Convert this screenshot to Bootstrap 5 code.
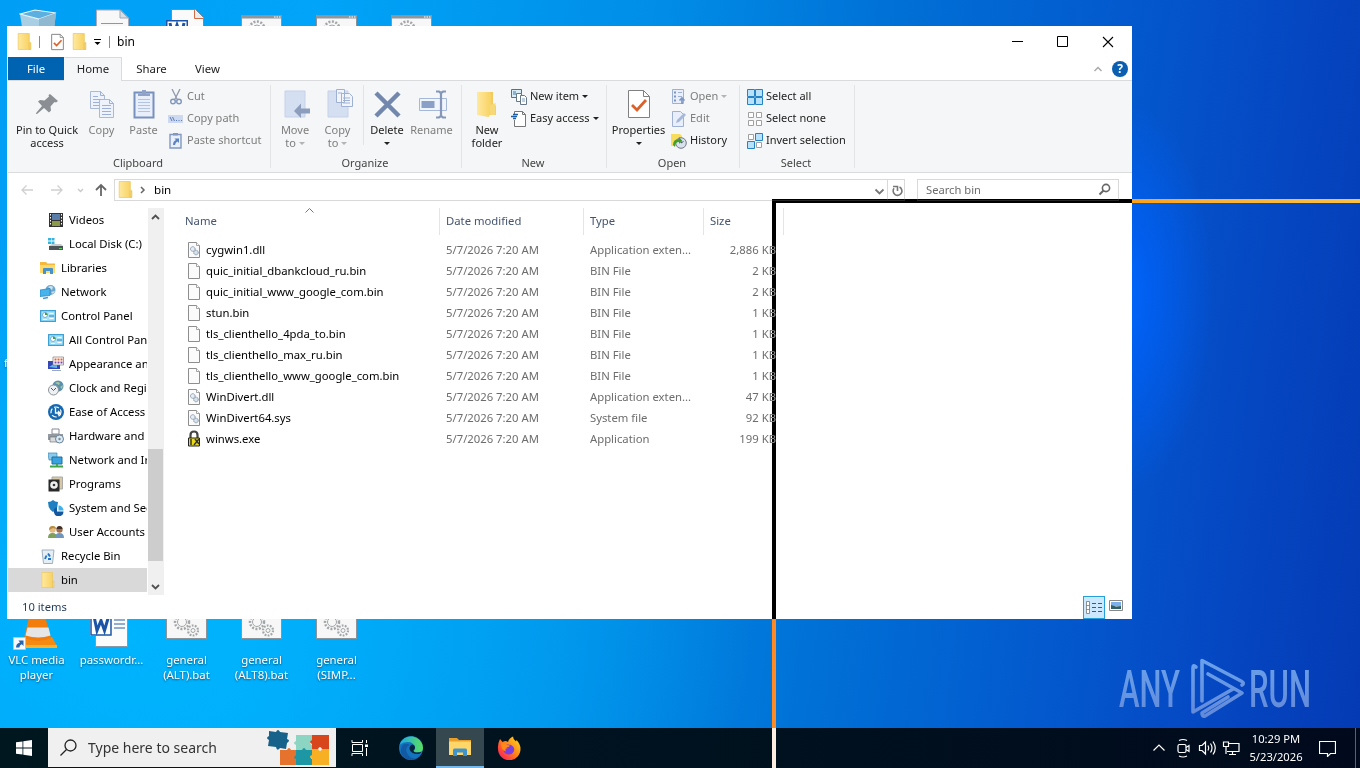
<!DOCTYPE html>
<html lang="en">
<head>
    <meta charset="UTF-8">
    <meta name="viewport" content="width=device-width, initial-scale=1.0">
    <title>bin</title>
    <!-- Bootstrap CSS -->
    <link href="https://cdn.jsdelivr.net/npm/bootstrap@5.3.0/dist/css/bootstrap.min.css" rel="stylesheet">
    <style>
        body {
            width: 1360px;
            height: 768px;
            overflow: hidden;
            font-family: "Noto Sans", "Open Sans", sans-serif;
            font-size: 11.4px;
            line-height: 13px;
            color: #000;
            white-space: nowrap;
        }
        svg { display: block; flex: none; }
        .desktop {
            height: 728px;
            background:
                radial-gradient(ellipse 100px 200px at 1115px 295px, rgba(0, 104, 255, 1), rgba(0, 98, 250, .75) 35%, rgba(0, 80, 220, 0) 100%),
                linear-gradient(97deg, #009ff5 0, #00a4f8 22%, #008ee8 45%, #0070d6 62%, #0453cb 82%, #0545c0 91%, #043bb4 100%);
        }
        .desktop::before {
            content: "";
            position: absolute;
            inset: 0 0 40px 0;
            background: radial-gradient(ellipse 620px 420px at 130px 640px, rgba(0, 184, 255, .8), rgba(0, 184, 255, 0));
        }
        .shortcut { position: absolute; width: 75px; text-align: center; color: #fff; line-height: 15px; text-shadow: 0 1px 2px rgba(0, 0, 0, .55); }
        .shortcut svg { margin: 0 auto; }
        .brand { position: absolute; left: 1115px; top: 655px; }

        /* explorer window */
        .explorer { position: absolute; left: 7px; top: 26px; width: 1125px; height: 593px; background: #fff; padding-left: 1px; }
        .title-row { height: 31px; }
        .title-row .sep { width: 1px; height: 12px; background: #8c8c8c; }
        .tabs-row { height: 23px; color: #222; }
        .tab-item { height: 23px; line-height: 23px; text-align: center; }
        .tab-file { width: 56px; background: #0063b1; color: #fff; }
        .tab-home { width: 58px; height: 24px; line-height: 21px; background: #f5f6f7; border: 1px solid #dadbdc; border-bottom: 0; border-left-color: #f5f6f7; margin-bottom: -1px; position: relative; }
        .ribbon { height: 93px; background: #f5f6f7; border-top: 1px solid #dadbdc; border-bottom: 1px solid #dadbdc; color: #222; font-size: 11px; }
        .rgroup { border-right: 1px solid #e2e3e4; margin: 4px 0; height: 83px; }
        .rgroup-body { height: 70px; }
        .rgroup-label { text-align: center; line-height: 16px; color: #444; padding-right: 2px; }
        .big { padding-top: 3px; text-align: center; }
        .big svg { margin: 0 auto 3px; }
        .small-row { height: 22px; gap: 3px; padding-bottom: 1px; }
        .small-row svg { position: relative; top: 1px; }
        .off { color: #7d7d7d; }
        .caret { display: inline-block; border: 3px solid transparent; border-top-color: currentColor; border-bottom: 0; vertical-align: 2px; margin-left: 3px; }
        .off .caret { opacity: .55; }

        .address-row { height: 35px; padding-top: 6px; }
        .field { height: 22px; border: 1px solid #d9d9d9; padding-bottom: 1px; }

        .nav-pane { width: 139px; overflow: hidden; }
        .node { height: 24px; gap: 5px; padding-left: 32px; padding-bottom: 2px; font-size: 11.3px; }
        .node svg { position: relative; top: 1px; }
        .node.deep { padding-left: 40px; }
        .node.on { background: #d9d9d9; }
        .scroller { width: 16px; background: #f0f0f0; margin-left: 1px; }
        .thumb { height: 112px; width: 15px; background: #cdcdcd; }

        .head-row { height: 27px; color: #44546f; line-height: 26px; font-size: 11.3px; }
        .head-row > div { border-right: 1px solid #e5e5e5; }
        .c-name { width: 276px; }
        .c-date { width: 144px; padding-left: 6px; }
        .c-type { width: 120px; padding-left: 6px; }
        .c-size { width: 80px; padding-left: 6px; }
        .frow { height: 21px; color: #6d6d6d; font-size: 11.3px; }
        .frow .c-name { color: #000; padding-left: 22px; gap: 4px; }
        .frow .c-size { text-align: right; padding-right: 8px; }
        .status { height: 24px; color: #1e395b; }
        .view-on { width: 22px; height: 23px; background: #cce8ff; border: 1px solid #26a0da; }

        /* taskbar */
        .taskbar { height: 40px; background: linear-gradient(90deg, #00171f, #00121f 50%, #010a1c); color: #fff; }
        .task-btn { width: 48px; height: 40px; }
        .task-on { background: #35474f; border-bottom: 2px solid #76b9ed; }
        .search-box { width: 288px; height: 39px; background: #f0f0f0; color: #333; font-size: 14px; }

        /* cursor guides, they invert whatever is under them */
        .guide { position: absolute; background: #fff; mix-blend-mode: difference; z-index: 10; }
        .guide-h { left: 772px; top: 199px; width: 588px; height: 4px; }
        .guide-v { left: 772px; top: 203px; width: 4px; height: 565px; }
    </style>
</head>
<body>
    <!-- Shared icons -->
    <svg width="0" height="0" class="position-absolute">
        <defs>
            <linearGradient id="gFolder" x1="0" x2="1"><stop offset="0" stop-color="#ffe9a0"/><stop offset="1" stop-color="#f8d15f"/></linearGradient>
            <linearGradient id="gFox" x1="1" y1="0" x2="0" y2="1"><stop offset="0" stop-color="#ffe226"/><stop offset=".45" stop-color="#ff8a16"/><stop offset=".8" stop-color="#ff3647"/><stop offset="1" stop-color="#e31587"/></linearGradient>
            <linearGradient id="gEdge" x1="0" y1="0" x2="1" y2="0"><stop offset="0" stop-color="#1ca8e8"/><stop offset="1" stop-color="#5be05a"/></linearGradient>
            <linearGradient id="gBrand" gradientUnits="userSpaceOnUse" x1="0" x2="0" y1="5" y2="62"><stop offset="0" stop-color="#7db2f2"/><stop offset="1" stop-color="#7395de"/></linearGradient>
        </defs>
        <symbol id="folder" viewBox="0 0 16 16"><path d="M2 .5h10.500V10l1.500-1v6.500H2z" fill="#edc75b"/><path d="M2 .5h10.500v12l.5 3H2z" fill="url(#gFolder)" stroke="#ecc966" stroke-width=".6"/><path d="M12.300 9.500l1.700-.5v6.500h-1.500z" fill="#fbdc7d" stroke="#e0b84f" stroke-width=".5"/></symbol>
        <symbol id="file" viewBox="0 0 16 18"><path d="M2.500 1.500h8l3 3v12h-11z" fill="#fbfbfb" stroke="#8e8e8e"/><path d="M10.500 1.500v3h3" fill="#fff" stroke="#8e8e8e" stroke-width=".8"/></symbol>
        <symbol id="dll" viewBox="0 0 16 18"><path d="M2.500 1.500h8l3 3v12h-11z" fill="#fbfbfb" stroke="#8e8e8e"/><path d="M10.500 1.500v3h3" fill="#fff" stroke="#8e8e8e" stroke-width=".8"/><circle cx="6.800" cy="8" r="2.300" fill="#e6eef5" stroke="#7d8fa3" stroke-dasharray="1.200 .5"/><circle cx="10" cy="11.500" r="2.300" fill="#d5e2ee" stroke="#7d8fa3" stroke-dasharray="1.200 .5"/></symbol>
        <symbol id="check" viewBox="0 0 16 20"><path d="M1.500 1.500h9.500l3.500 3.500v13.500h-13z" fill="#fff" stroke="#7b7b7b"/><path d="M11 1.500V5h3.500" fill="none" stroke="#7b7b7b" stroke-width=".8"/><path d="M4 11l3 3 5.500-6" fill="none" stroke="#d9622b" stroke-width="1.800"/></symbol>
        <symbol id="panel" viewBox="0 0 16 16"><path d="M.5 2.500h15v11H.5z" fill="#a9e1f9" stroke="#1c7fb5"/><path d="M1 3h14v10H1z" fill="none" stroke="#5ec2ee"/><circle cx="5" cy="7" r="2.500" fill="#fff" stroke="#3a88b8" stroke-width=".6"/><path d="M5 7V4.500A2.500 2.500 0 0 1 7.500 7z" fill="#4d9c3f"/><path d="M9.500 5.500h4M9.500 10.500h4M3 11.500h4" stroke="#fff" stroke-width="1.200"/><path d="M9 8h5" stroke="#277fae"/></symbol>
        <symbol id="bat" viewBox="0 0 41 50"><path d="M.5 .5h40v48H.5z" fill="#f7f7f7" stroke="#8d9499"/><path d="M1 1h39v2.500H1z" fill="#8c979e"/><path d="M33 2h1.500M35.500 2H37M38 2h1.500" stroke="#fff"/><g fill="none" stroke="#a3a6a8"><circle cx="16" cy="14" r="7.500" stroke-dasharray="2 1.500" stroke-width="2.500"/><circle cx="16" cy="14" r="4"/></g><g fill="none" stroke="#a3a6a8"><circle cx="16" cy="32" r="7" stroke-dasharray="2 1.500" stroke-width="2.500"/><circle cx="16" cy="32" r="4.500"/><circle cx="27" cy="40.500" r="5" stroke-dasharray="1.800 1.300" stroke-width="2.200"/><circle cx="27" cy="40.500" r="2"/></g></symbol>
    </svg>

    <div class="desktop">
        <!-- Desktop shortcuts -->
        <div class="shortcut" style="left:0;top:9px"><svg width="38" height="46" viewBox="0 0 38 46"><path d="M1 5l15-4 21 3-5 40H7z" fill="#a9cfe4"/><path d="M1 5l15-4 21 3-17 6z" fill="#5bb0df" stroke="#e6f4fb" stroke-width="1.200"/><path d="M20 10l17-6-5 40H20z" fill="#8fb9d0"/></svg></div>
        <div class="shortcut" style="left:75px;top:9px"><svg width="33" height="44" viewBox="0 0 33 44"><path d="M.5 1h24l8 8v34H.5z" fill="#f8f8f8" stroke="#aab"/><path d="M24 1v8h8z" fill="#d9dde2" stroke="#9ab"/><path d="M5 14.500h22M5 17.500h22" stroke="#8699ae"/></svg></div>
        <div class="shortcut" style="left:147px;top:8px"><svg width="38" height="44" viewBox="0 0 38 44"><path d="M5.500 1.500h24l8 8V43H5.500z" fill="#fafafa" stroke="#7b8a99"/><path d="M28.500 1.500v9h9" fill="#e8ecf0" stroke="#d06d45"/><path d="M0 12h22v22H0z" fill="#1c55a8"/><path d="M1.500 13.500h19v19h-19z" fill="#fff"/><path d="M4 15l3 14 4-12 4 12 3-14" fill="none" stroke="#1c55a8" stroke-width="3"/></svg></div>
        <div class="shortcut" style="left:224px;top:15px"><svg width="41" height="50"><use href="#bat"/></svg></div>
        <div class="shortcut" style="left:299px;top:15px"><svg width="41" height="50"><use href="#bat"/></svg></div>
        <div class="shortcut" style="left:374px;top:15px"><svg width="41" height="50"><use href="#bat"/></svg></div>
        <div class="shortcut text-start" style="left:4px;top:355px">f</div>

        <div class="shortcut" style="left:-1px;top:600px"><svg width="48" height="52" viewBox="0 0 48 52"><path d="M12 37h27l5 9v2H8z" fill="#f58a12"/><path d="M19 5h10l9 33q-13 6-27 0z" fill="#f27c0c"/><path d="M14.500 27.500h21l2 8q-12 4-25 0z" fill="#e6e6e6"/><path d="M7 45h37v3H7z" fill="#ffb02a"/><path d="M.5 37.500h12v12H.5z" fill="#f5f8fc" stroke="#b6c7d8"/><path d="M3 47.500q0-4 4-5l-1.500-2h5v5.500l-1.700-1.700q-2 .5-2.500 3.200z" fill="#2a63ad"/></svg>VLC media<br>player</div>
        <div class="shortcut" style="left:74px;top:604px"><svg style="margin-left:16px" width="38" height="48" viewBox="0 0 38 48"><path d="M5.500 1h32v41.500h-32z" fill="#fbfbfb" stroke="#8a97a5"/><path d="M24 16h11M24 20h11M24 24h11" stroke="#2b5da8"/><path d="M0 9h22v23H0z" fill="#fff"/><path d="M1 10h20v21H1z" fill="#fff" stroke="#1c55a8" stroke-width="1.500"/><path d="M4.500 14.500l2.500 12 4-10 3.500 10 3.500-12" fill="none" stroke="#1c55a8" stroke-width="3"/></svg>passwordr...</div>
        <div class="shortcut" style="left:149px;top:590px"><svg width="41" height="62" viewBox="0 0 41 62"><use href="#bat" width="41" height="50"/></svg>general<br>(ALT).bat</div>
        <div class="shortcut" style="left:224px;top:590px"><svg width="41" height="62" viewBox="0 0 41 62"><use href="#bat" width="41" height="50"/></svg>general<br>(ALT8).bat</div>
        <div class="shortcut" style="left:299px;top:590px"><svg width="41" height="62" viewBox="0 0 41 62"><use href="#bat" width="41" height="50"/></svg>general<br>(SIMP...</div>

        <!-- Watermark -->
        <svg class="brand" width="220" height="70" viewBox="0 0 220 70" opacity=".85">
            <g font-family="Roboto, sans-serif" font-size="51" font-weight="500" fill="url(#gBrand)">
                <text x="4" y="52" textLength="61" lengthAdjust="spacingAndGlyphs">ANY</text>
                <text x="134" y="52" textLength="62" lengthAdjust="spacingAndGlyphs">RUN</text>
            </g>
            <g fill="none" stroke="url(#gBrand)" stroke-width="3.600" stroke-linejoin="round" stroke-linecap="round">
                <path d="M81 12q-3-3-3 1V57L118 34"/>
                <path d="M87 46V5.500L126 26q4 2 1 4"/>
                <path d="M93 19L127 38 90 61q-3 1-3-3L113 42"/>
            </g>
        </svg>
    </div>

    <!-- Explorer window -->
    <div class="explorer d-flex flex-column">
        <div class="title-row d-flex align-items-center">
            <svg class="ms-2" width="17" height="17"><use href="#folder"/></svg>
            <div class="sep" style="margin-left:6px"></div>
            <svg style="margin-left:10px" width="15" height="18"><use href="#check"/></svg>
            <svg style="margin-left:6px" width="17" height="17"><use href="#folder"/></svg>
            <svg style="margin-left:5px" width="9" height="9" viewBox="0 0 9 9"><path d="M1 2.500h7" stroke="#000"/><path d="M1.500 5h6l-3 3z"/></svg>
            <div class="sep" style="margin-left:7px"></div>
            <div style="font-size:12px;margin-left:7px">bin</div>
            <svg class="ms-auto" width="11" height="11" viewBox="0 0 11 11"><path d="M0 5.500h11" stroke="#000"/></svg>
            <svg style="margin-left:34px" width="11" height="11" viewBox="0 0 11 11"><path d="M.5 .5h10v10H.5z" fill="none" stroke="#000"/></svg>
            <svg style="margin:0 18px 0 34px" width="12" height="12" viewBox="0 0 12 12"><path d="M1 1l10 10M11 1L1 11" stroke="#000" stroke-width="1.100"/></svg>
        </div>
        <div class="tabs-row d-flex">
            <div class="tab-item tab-file">File</div>
            <div class="tab-item tab-home">Home</div>
            <div class="tab-item" style="width:59px">Share</div>
            <div class="tab-item" style="width:53px">View</div>
            <div class="ms-auto d-flex align-items-center" style="padding-right:4px;gap:9px">
                <svg width="10" height="8" viewBox="0 0 10 8"><path d="M1.500 6L5 2.500 8.500 6" fill="none" stroke="#aaa" stroke-width="1.500"/></svg>
                <svg width="16" height="16" viewBox="0 0 16 16"><circle cx="8" cy="8" r="8" fill="#0b5fb0"/><text x="8" y="12.300" font-size="12" font-weight="700" fill="#fff" text-anchor="middle">?</text></svg>
            </div>
        </div>
        <div class="ribbon d-flex">
            <!-- Clipboard -->
            <div class="rgroup" style="width:263px">
                <div class="rgroup-body d-flex">
                    <div class="big" style="width:78px"><svg width="32" height="32" viewBox="0 0 32 32"><path d="M19 6l8 7-2 1.500-1.500-.5-4 4.500.5 4-2 2-5-4.500L6 26l-1 0 .5-1.500L11 18l-4-4.500 2-1.500 4.500.5 4.500-4-.5-1.500z" fill="#8b8f94"/></svg>Pin to Quick<br>access</div>
                    <div class="big off" style="width:31px;margin-right:5px"><svg width="32" height="32" viewBox="0 0 32 32"><g stroke="#a9b9d6" fill="#eef2fa"><path d="M4.500 3.500h10l4 4v13h-14z"/><path d="M13.500 11.500h10l4 4v14h-14z"/></g><path d="M14.500 3.500v4h4M23.500 11.500v4h4M7 8.500h5M7 11.500h8M7 14.500h6M7 17.500h6M16 17.500h9M16 20.500h9M16 23.500h9M16 26.500h9" stroke="#9db1d6" fill="none"/></svg>Copy</div>
                    <div class="big off" style="width:43px"><svg width="32" height="32" viewBox="0 0 32 32"><path d="M6.500 4.500h19v25h-19z" fill="#e8eefa" stroke="#7890bd" stroke-width="2"/><path d="M10 5.500h12V8H10zM14 2h4v4h-4z" fill="#8fa3c8"/><path d="M10 11.500h12M10 14.500h12M10 17.500h12M10 20.500h12M10 23.500h12" stroke="#b3c3e3"/></svg>Paste</div>
                    <div style="margin-left:3px">
                        <div class="small-row d-flex align-items-center off"><svg width="16" height="16" viewBox="0 0 16 16"><path d="M4 0l5.500 11M12 0L6.500 11" stroke="#8e99ab" stroke-width="1.300"/><circle cx="5" cy="12.500" r="2.300" fill="none" stroke="#8197bd" stroke-width="1.400"/><circle cx="11" cy="12.500" r="2.300" fill="none" stroke="#8197bd" stroke-width="1.400"/></svg>Cut</div>
                        <div class="small-row d-flex align-items-center off"><svg width="16" height="16" viewBox="0 0 16 16"><path d="M0 4h15v8H0z" fill="#cdd9f0"/><path d="M2 6l2 4M4.500 6l2 4M8 9.500h1M10.500 9.500h1M13 9.500h1" stroke="#5b7bb5"/></svg>Copy path</div>
                        <div class="small-row d-flex align-items-center off"><svg width="16" height="16" viewBox="0 0 16 16"><path d="M2 1.500h11v13.500H2z" fill="#eaf0fb" stroke="#8398c0" stroke-width="1.400"/><path d="M5 0h5v2.500H5z" fill="#8398c0"/><path d="M5 12q0-4 3-5L6.500 5.500H11V10L9.500 8.500Q7.500 9 7 12z" fill="#5b83c4"/></svg>Paste shortcut</div>
                    </div>
                </div>
                <div class="rgroup-label">Clipboard</div>
            </div>
            <!-- Organize -->
            <div class="rgroup" style="width:191px">
                <div class="rgroup-body d-flex">
                    <div class="big off" style="width:42px;margin-left:3px"><svg width="32" height="32" viewBox="0 0 32 32"><path d="M6 3h20v26H6z" fill="#d5dff2" stroke="#c5d1e8"/><path d="M31 20.500H22v-5L15 23l7 7v-4.500h9z" fill="#8d9ebd"/></svg>Move<br>to<span class="caret"></span></div>
                    <div class="big off" style="width:43px"><svg width="32" height="32" viewBox="0 0 32 32"><path d="M6 3h20v26H6z" fill="#d5dff2" stroke="#c5d1e8"/><path d="M14.500 1.500h8v13h-8zM19.500 5.500h8l3 3v10h-11z" fill="#f1f4fb" stroke="#9fb1d2"/><path d="M21 10h7M21 12.500h7M21 15h7M16 5h4" stroke="#9fb1d2"/></svg>Copy<br>to<span class="caret"></span></div>
                    <div style="width:1px;height:60px;background:#e2e3e4;margin:0 2px 0 4px"></div>
                    <div class="big" style="width:42px"><svg width="32" height="32" viewBox="0 0 32 32"><path d="M5 5l23 23M28 5L5 28" stroke="#7287ad" stroke-width="4.500"/></svg>Delete<br><span class="caret m-0"></span></div>
                    <div class="big off" style="width:47px"><svg width="32" height="32" viewBox="0 0 32 32"><path d="M3.500 10.500h27v12h-27z" fill="#f0f4fb" stroke="#a5b8da"/><path d="M5.500 13h13v7h-13z" fill="#8ba0c6"/><path d="M20 3.500h3l2 1.500 2-1.500h3M20 29.500h3l2-1.500 2 1.500h3M25 5v23" fill="none" stroke="#8497bb" stroke-width="2.200"/></svg>Rename</div>
                </div>
                <div class="rgroup-label">Organize</div>
            </div>
            <!-- New -->
            <div class="rgroup" style="width:145px">
                <div class="rgroup-body d-flex">
                    <div class="big" style="width:46px;margin-left:2px"><svg width="32" height="32" viewBox="0 0 32 32"><path d="M6 4h16v16l3-3v10H6z" fill="#f0c95f"/><path d="M6 4h13l1.500 3v18l-3 4L6 27z" fill="url(#gFolder)"/><path d="M18.500 17l6-2v12h-5z" fill="#f7d877"/></svg>New<br>folder</div>
                    <div style="margin-left:1px">
                        <div class="small-row d-flex align-items-center"><svg width="16" height="16" viewBox="0 0 16 16"><path d="M.5 .5h10v8H.5z" fill="#d8edf8" stroke="#3b78a8"/><path d="M2 3h3M2 5h3" stroke="#3b78a8"/><path d="M5.500 4.500h5v8h-5z" fill="#fff" stroke="#678"/><path d="M9.500 6.500h4l2 2v7h-6z" fill="#fff" stroke="#678"/><path d="M11 10h3M11 12h3" stroke="#7aa0c0"/></svg><span>New item<span class="caret"></span></span></div>
                        <div class="small-row d-flex align-items-center"><svg width="16" height="16" viewBox="0 0 16 16"><path d="M3.500 4V.5h8l3 3v12h-11V9" fill="#fff" stroke="#777"/><path d="M11.500 .5v3h3" fill="none" stroke="#777"/><path d="M2 3.500h5M0 5.500h6M2 7.500h3" stroke="#1a5fa8" stroke-width="1.300"/></svg><span>Easy access<span class="caret"></span></span></div>
                    </div>
                </div>
                <div class="rgroup-label">New</div>
            </div>
            <!-- Open -->
            <div class="rgroup" style="width:133px">
                <div class="rgroup-body d-flex">
                    <div class="big" style="width:59px;margin-left:2px"><svg width="32" height="32" viewBox="0 0 32 32"><path d="M5.500 2.500h15l6 6v21h-21z" fill="#fff" stroke="#808080"/><path d="M20.500 2.500v6h6" fill="none" stroke="#808080"/><path d="M9 17l5 5 9-10" fill="none" stroke="#d9622b" stroke-width="2.800"/></svg>Properties<br><span class="caret m-0"></span></div>
                    <div style="margin-left:3px">
                        <div class="small-row d-flex align-items-center off"><svg width="16" height="16" viewBox="0 0 16 16"><path d="M1.500 .5h11v14h-11z" fill="#e8eefa" stroke="#9fb1d2"/><path d="M3 3.500h2M3 7.500h2M3 11.500h2" stroke="#7d95c2" stroke-width="2"/><path d="M7 3.500h4M7 7.500h4" stroke="#9fb1d2"/><path d="M11 15v-5M8.500 11.500L11 9l2.500 2.500" fill="none" stroke="#7d95c2" stroke-width="1.700"/></svg><span>Open<span class="caret"></span></span></div>
                        <div class="small-row d-flex align-items-center off"><svg width="16" height="16" viewBox="0 0 16 16"><path d="M1.500 .5h8l3 3v12h-11z" fill="#e8eefa" stroke="#9fb1d2"/><path d="M5 12l1-3 7-7 2 2-7 7z" fill="#a5b7da"/></svg><span>Edit</span></div>
                        <div class="small-row d-flex align-items-center"><svg width="16" height="16" viewBox="0 0 16 16"><path d="M0 1h9l2 2v10H0z" fill="#f8dc5c"/><circle cx="10" cy="10" r="5.300" fill="#d8e2ec" stroke="#778"/><path d="M10 7v3l2.500-1.500" fill="none" stroke="#456"/><path d="M2 12q0-6 6-6V4l3 3.500L8 11V9Q4 9 4 14z" fill="#43a02c"/></svg><span>History</span></div>
                    </div>
                </div>
                <div class="rgroup-label">Open</div>
            </div>
            <!-- Select -->
            <div class="rgroup" style="width:115px">
                <div class="rgroup-body" style="padding-left:7px">
                    <div class="small-row d-flex align-items-center"><svg width="16" height="16" viewBox="0 0 16 16"><path d="M.5 .5h7v7h-7zM8.500 .5h7v7h-7zM.5 8.500h7v7h-7zM8.500 8.500h7v7h-7z" fill="#b8e2fb" stroke="#2583c5"/></svg>Select all</div>
                    <div class="small-row d-flex align-items-center"><svg width="16" height="16" viewBox="0 0 16 16"><path d="M1.500 1.500h5v5h-5zM9.500 1.500h5v5h-5zM1.500 9.500h5v5h-5zM9.500 9.500h5v5h-5z" fill="#fff" stroke="#a0a0a0"/></svg>Select none</div>
                    <div class="small-row d-flex align-items-center"><svg width="16" height="16" viewBox="0 0 16 16"><path d="M1.500 1.500h5v5h-5zM9.500 9.500h5v5h-5z" fill="#fff" stroke="#a0a0a0"/><path d="M8.500 .5h7v7h-7zM.5 8.500h7v7h-7z" fill="#b8e2fb" stroke="#2583c5"/></svg>Invert selection</div>
                </div>
                <div class="rgroup-label">Select</div>
            </div>
        </div>

        <!-- Address bar -->
        <div class="address-row d-flex">
            <div class="d-flex align-items-center" style="width:106px;height:22px">
                <svg width="106" height="22" viewBox="0 0 106 22" fill="none"><path d="M25 11H14M18.500 6.500L14 11l4.500 4.500M43 11h11M49.500 6.500L54 11l-4.500 4.500" stroke="#d0d0d0" stroke-width="1.300"/><path d="M70 10l2.500 2.500L75 10" stroke="#c8c8c8" stroke-width="1.300"/><path d="M93 17V6M88 11l5-5 5 5" stroke="#666" stroke-width="1.800"/></svg>
            </div>
            <div class="field d-flex align-items-center" style="width:791px">
                <svg style="margin-left:2px" width="17" height="17"><use href="#folder"/></svg>
                <svg style="margin-left:6px" width="6" height="8" viewBox="0 0 6 8"><path d="M1 1l3 3-3 3" fill="none" stroke="#666" stroke-width="1.500"/></svg>
                <span style="margin-left:8px;font-size:11.600px">bin</span>
                <svg class="ms-auto" width="30" height="20" viewBox="0 0 30 20" fill="none"><path d="M1.500 9.500L5.500 13.500l4-4" stroke="#777" stroke-width="1.800"/><path d="M13.500 0v20" stroke="#d9d9d9"/><path d="M20 8.300a4.400 4.400 0 1 0 5.500-1.300" stroke="#777" stroke-width="1.600"/><path d="M19 6.500h4.500V11" stroke="#777" stroke-width="1.600"/></svg>
            </div>
            <div class="field d-flex align-items-center justify-content-between" style="width:202px;margin-left:12px;padding-left:8px;padding-right:7px;color:#6d6d6d;font-size:11.200px">
                Search bin
                <svg width="13" height="13" viewBox="0 0 13 13" fill="none"><circle cx="8" cy="5" r="3.600" stroke="#666" stroke-width="1.600"/><path d="M5.500 7.500L1.500 11.500" stroke="#666" stroke-width="2"/></svg>
            </div>
        </div>

        <div class="d-flex flex-grow-1">
            <!-- Navigation tree -->
            <div class="nav-pane">
                <div class="node deep d-flex align-items-center"><svg width="16" height="16" viewBox="0 0 16 16"><path d="M1 1h14v14H1z" fill="#333"/><path d="M4 2h8v6H4z" fill="#5a7ca8"/><path d="M4 9h8v5H4z" fill="#8a9a4a"/><path d="M2.500 2v12M13.500 2v12" stroke="#fff" stroke-dasharray="1.500 1.500"/></svg>Videos</div>
                <div class="node deep d-flex align-items-center"><svg width="16" height="16" viewBox="0 0 16 16"><path d="M0 2h3v2.500H0zM3.500 2h3v2.500h-3zM0 5.500h3V8H0zM3.500 5.500h3V8h-3z" fill="#36b3dd"/><path d="M4 8h9l2 2H1z" fill="#c5cacd"/><path d="M1 10h14v4H1z" fill="#4d5459"/><path d="M11 12.500h3" stroke="#4be04b"/></svg>Local Disk (C:)</div>
                <div class="node d-flex align-items-center"><svg width="16" height="16" viewBox="0 0 16 16"><path d="M0 2h6l1.500 1.500H15V13H0z" fill="#f5b83c"/><path d="M0 5h15v8H0z" fill="#ffd96b"/><path d="M3 14V9q0-1 1-1h8q1 0 1 1v5h-3v-3H6v3z" fill="#4792c8"/></svg>Libraries</div>
                <div class="node d-flex align-items-center"><svg width="16" height="16" viewBox="0 0 16 16"><circle cx="10.500" cy="6" r="5" fill="#6ea7cd"/><path d="M8 3q3-2 5 0l-1 3zM11 8l4-1-2 3z" fill="#cde2ee"/><path d="M0 6l10-1.500v7L0 12.500z" fill="#48b4ee" stroke="#2183bd" stroke-width=".7"/><path d="M3 14.500l5-1" stroke="#4b9ac7" stroke-width="1.300"/></svg>Network</div>
                <div class="node d-flex align-items-center"><svg width="16" height="16"><use href="#panel"/></svg>Control Panel</div>
                <div class="node deep d-flex align-items-center"><svg width="16" height="16"><use href="#panel"/></svg>All Control Panel Items</div>
                <div class="node deep d-flex align-items-center"><svg width="16" height="16" viewBox="0 0 16 16"><path d="M0 5h12v8H0z" fill="#3546b8"/><path d="M1 11l8-5v6z" fill="#63b6ee"/><path d="M5 1h10.500v8H5z" fill="#fff" stroke="#777" stroke-width=".7"/><path d="M6.500 3.500h8" stroke="#e0642d" stroke-width="1.800" stroke-dasharray="2 1"/><path d="M6.500 6.500h8" stroke="#7c48b2" stroke-width="1.800" stroke-dasharray="2 1"/><path d="M4 14.500h9" stroke="#9ab"/></svg>Appearance and Personalization</div>
                <div class="node deep d-flex align-items-center"><svg width="16" height="16" viewBox="0 0 16 16"><circle cx="10" cy="6" r="5.500" fill="#5b8fae"/><path d="M7 3q3-2 5 0l-1 2zM12 7l3-2-1 4z" fill="#a5c6a0"/><circle cx="5.500" cy="10" r="5" fill="#eef1f3" stroke="#8b9399"/><path d="M3 8l2.500 2.500L8 8" fill="none" stroke="#555"/></svg>Clock and Region</div>
                <div class="node deep d-flex align-items-center"><svg width="16" height="16" viewBox="0 0 16 16"><circle cx="8" cy="8" r="8" fill="#1668b0"/><circle cx="8" cy="8" r="5" fill="none" stroke="#fff" stroke-width="1.200" stroke-dasharray="5 2"/><path d="M7.500 4v5H12M10 7l2 2-2 2" fill="none" stroke="#fff" stroke-width="1.300"/></svg>Ease of Access</div>
                <div class="node deep d-flex align-items-center"><svg width="16" height="16" viewBox="0 0 16 16"><path d="M4 1h7v5H4z" fill="#fff" stroke="#889"/><path d="M0 6h15v6H0z" fill="#9299a0"/><path d="M2 9h9v5H2z" fill="#d8dcdf" stroke="#666" stroke-width=".6"/><circle cx="11.500" cy="11" r="4" fill="#dceaf3" stroke="#67849a"/><circle cx="11.500" cy="11" r="1.200" fill="#789"/></svg>Hardware and Sound</div>
                <div class="node deep d-flex align-items-center"><svg width="16" height="16" viewBox="0 0 16 16"><path d="M0 1h9v7H1z" fill="#8acbed" stroke="#3387b8" stroke-width=".7"/><path d="M4 5h10v7H4z" fill="#38a2e0" stroke="#1c6f9f"/><path d="M2 14.500h13M9 12v3" stroke="#3fa447" stroke-width="1.800"/></svg>Network and Internet</div>
                <div class="node deep d-flex align-items-center"><svg width="16" height="16" viewBox="0 0 16 16"><path d="M4 1h10.500v12H4z" fill="#d8c8a4" stroke="#aaa"/><path d="M.5 3.500h11v12H.5z" fill="#292929"/><circle cx="6" cy="9" r="3.800" fill="#eee"/><circle cx="6" cy="9" r="1.300" fill="#333"/></svg>Programs</div>
                <div class="node deep d-flex align-items-center"><svg width="16" height="16" viewBox="0 0 16 16"><path d="M0 2q3 0 5-2 2 2 5 2 0 7-5 10Q0 9 0 2z" fill="#1f7fc0"/><path d="M9 7v4.500h6.500A4.800 4.800 0 1 1 9 7z" fill="#1257a0"/><path d="M10.500 5.500a5 5 0 0 1 5 5h-5z" fill="#3eb2ec"/></svg>System and Security</div>
                <div class="node deep d-flex align-items-center"><svg width="16" height="16" viewBox="0 0 16 16"><path d="M0 14q0-5 4.500-5T9 14z" fill="#7ba05b"/><circle cx="4.500" cy="5.500" r="3.200" fill="#e4bb82"/><path d="M1 6q0-4 3.500-4T8 5L5 4z" fill="#b98b3c"/><path d="M7 14q0-5 4.500-5t4.500 5z" fill="#7096bd"/><circle cx="11.500" cy="5.500" r="3.200" fill="#a36f4a"/><path d="M8.500 5q.5-3 3-3t3 3z" fill="#3d3029"/></svg>User Accounts</div>
                <div class="node d-flex align-items-center"><svg width="16" height="16" viewBox="0 0 16 16"><path d="M2 2h12l-1.500 13.500h-9z" fill="#e5eef4" stroke="#9fb0bd"/><path d="M8 5.500l2 3M11 11H8M5 11l1.500-3.500" stroke="#1c74c9" stroke-width="1.900"/></svg>Recycle Bin</div>
                <div class="node on d-flex align-items-center"><svg width="16" height="16"><use href="#folder"/></svg>bin</div>
            </div>
            <div class="scroller d-flex flex-column justify-content-between">
                <svg width="15" height="17" viewBox="0 0 15 17"><path d="M4 11l3.500-3.500L11 11" fill="none" stroke="#505050" stroke-width="1.800"/></svg>
                <div class="thumb mt-auto" style="margin-bottom:17px"></div>
                <svg width="15" height="17" viewBox="0 0 15 17"><path d="M4 7L7.500 10.500 11 7" fill="none" stroke="#505050" stroke-width="1.800"/></svg>
            </div>

            <!-- File list -->
            <div class="flex-grow-1">
                <div class="head-row d-flex mb-1">
                    <div class="c-name position-relative" style="padding-left:21px">Name<svg class="position-absolute" style="left:141px;top:0" width="9" height="5" viewBox="0 0 9 5"><path d="M.5 4.500l4-4 4 4" fill="none" stroke="#777"/></svg></div>
                    <div class="c-date">Date modified</div>
                    <div class="c-type">Type</div>
                    <div class="c-size">Size</div>
                </div>
                <div class="frow d-flex align-items-center"><div class="c-name d-flex align-items-center"><svg width="16" height="18"><use href="#dll"/></svg>cygwin1.dll</div><div class="c-date">5/7/2026 7:20 AM</div><div class="c-type">Application exten...</div><div class="c-size">2,886 KB</div></div>
                <div class="frow d-flex align-items-center"><div class="c-name d-flex align-items-center"><svg width="16" height="18"><use href="#file"/></svg>quic_initial_dbankcloud_ru.bin</div><div class="c-date">5/7/2026 7:20 AM</div><div class="c-type">BIN File</div><div class="c-size">2 KB</div></div>
                <div class="frow d-flex align-items-center"><div class="c-name d-flex align-items-center"><svg width="16" height="18"><use href="#file"/></svg>quic_initial_www_google_com.bin</div><div class="c-date">5/7/2026 7:20 AM</div><div class="c-type">BIN File</div><div class="c-size">2 KB</div></div>
                <div class="frow d-flex align-items-center"><div class="c-name d-flex align-items-center"><svg width="16" height="18"><use href="#file"/></svg>stun.bin</div><div class="c-date">5/7/2026 7:20 AM</div><div class="c-type">BIN File</div><div class="c-size">1 KB</div></div>
                <div class="frow d-flex align-items-center"><div class="c-name d-flex align-items-center"><svg width="16" height="18"><use href="#file"/></svg>tls_clienthello_4pda_to.bin</div><div class="c-date">5/7/2026 7:20 AM</div><div class="c-type">BIN File</div><div class="c-size">1 KB</div></div>
                <div class="frow d-flex align-items-center"><div class="c-name d-flex align-items-center"><svg width="16" height="18"><use href="#file"/></svg>tls_clienthello_max_ru.bin</div><div class="c-date">5/7/2026 7:20 AM</div><div class="c-type">BIN File</div><div class="c-size">1 KB</div></div>
                <div class="frow d-flex align-items-center"><div class="c-name d-flex align-items-center"><svg width="16" height="18"><use href="#file"/></svg>tls_clienthello_www_google_com.bin</div><div class="c-date">5/7/2026 7:20 AM</div><div class="c-type">BIN File</div><div class="c-size">1 KB</div></div>
                <div class="frow d-flex align-items-center"><div class="c-name d-flex align-items-center"><svg width="16" height="18"><use href="#dll"/></svg>WinDivert.dll</div><div class="c-date">5/7/2026 7:20 AM</div><div class="c-type">Application exten...</div><div class="c-size">47 KB</div></div>
                <div class="frow d-flex align-items-center"><div class="c-name d-flex align-items-center"><svg width="16" height="18"><use href="#dll"/></svg>WinDivert64.sys</div><div class="c-date">5/7/2026 7:20 AM</div><div class="c-type">System file</div><div class="c-size">92 KB</div></div>
                <div class="frow d-flex align-items-center"><div class="c-name d-flex align-items-center"><svg width="16" height="18" viewBox="0 0 16 18"><path d="M4.500 9V5q0-3.500 3.500-3.500T11.500 5v4" fill="none" stroke="#444" stroke-width="2.200"/><path d="M2.500 8h11v8h-11z" fill="#e8d91c" stroke="#222"/><path d="M5 9v6M9 9l4 5M13 9l-5 6" stroke="#333" stroke-width="1.500"/></svg>winws.exe</div><div class="c-date">5/7/2026 7:20 AM</div><div class="c-type">Application</div><div class="c-size">199 KB</div></div>
            </div>
        </div>

        <!-- Status bar -->
        <div class="status d-flex align-items-center">
            <div style="padding:0 0 2px 14px;font-size:11.200px">10 items</div>
            <div class="view-on ms-auto d-flex align-items-center justify-content-center"><svg width="16" height="13" viewBox="0 0 16 13"><path d="M.5 .5h3v12h-3zM.5 4.500h3M.5 8.500h3" fill="#fff" stroke="#777" stroke-width=".8"/><path d="M6 2.500h4M12 2.500h4M6 6.500h4M12 6.500h4M6 10.500h4M12 10.500h4" stroke="#555"/></svg></div>
            <svg style="margin:0 9px 3px 4px" width="14" height="11" viewBox="0 0 14 11"><path d="M.5 .5h13v10H.5z" fill="#fff" stroke="#888"/><path d="M2 2h10v4H2z" fill="#7cb0ec"/><path d="M2 5l5 1.500L12 6v3H2z" fill="#2f5f6b"/></svg>
        </div>
    </div>

    <!-- Taskbar -->
    <div class="taskbar d-flex position-relative">
        <div class="task-btn d-flex align-items-center justify-content-center"><svg width="16" height="16" viewBox="0 0 16 16"><path d="M0 2.300l6.500-.9v6.200H0zM7.300 1.300L16 0v7.600H7.300zM0 8.400h6.500v6.200L0 13.700zM7.300 8.400H16V16l-8.700-1.300z" fill="#fff"/></svg></div>
        <div class="search-box d-flex align-items-center">
            <svg style="margin-left:12px" width="17" height="17" viewBox="0 0 17 17" fill="none"><circle cx="10.500" cy="6.500" r="5.500" stroke="#222" stroke-width="1.300"/><path d="M6.500 10.500L.5 16.500" stroke="#222" stroke-width="1.300"/></svg>
            <span style="margin-left:11px">Type here to search</span>
            <svg class="ms-auto" style="margin-right:6px" width="64" height="36" viewBox="0 0 64 36">
                <path d="M3 1l7 1q2-4 4 0l8 1-1 6q4 1 0 4l-1 6-6-1q-3 4-4-1l-8-1 1-6q-4-2 0-4z" fill="#17628b"/>
                <path d="M14 20h7q2-4 4 0h5v6q4 2 0 4v5H14z" fill="#e5732e"/>
                <path d="M30 5h16v6q-4 2 0 4v5H30v-5q-4-2 0-4z" fill="#8cd5c3"/>
                <path d="M46 5h17v14h-7q-2-4-4 0h-6v-5q-4-2 0-4z" fill="#d8461c"/>
                <path d="M46 19h6q2 4 4 0h7v16H46v-7q-4-1 0-4z" fill="#f7b023"/>
                <path d="M30 20h6q2-4 4 0h6v5q-4 1 0 4v6H30v-6q-4-1 0-4z" fill="#1d97a4"/>
            </svg>
        </div>
        <div class="task-btn d-flex align-items-center justify-content-center"><svg width="18" height="16" viewBox="0 0 18 16" fill="none" stroke="#fff"><path d="M1 0v2.500h10.500V0M1.500 4.500h10v7h-10zM1 16v-2.500h10.500V16M15.500 0v3M15.500 8v8"/><path d="M14 4.500h3v2.500h-3z" fill="#fff" stroke="none"/></svg></div>
        <div class="task-btn d-flex align-items-center justify-content-center ps-1" style="width:52px;padding-right:2px"><svg width="24" height="24" viewBox="0 0 24 24"><circle cx="12" cy="12" r="12" fill="#1373bd"/><path d="M.5 9A12 12 0 0 1 24 12q0 4.500-5.500 4.500-4 0-4-2 1.500-1 1.500-3Q14.500 6 9 6 4 6 .5 9z" fill="url(#gEdge)"/><path d="M10.500 9Q5 12 8.500 18q3 5 9 4.500A12 12 0 0 1 8 23.300Q-1 18 3 10q3-4 7.500-1z" fill="#125aa3"/><path d="M16 11.500q0 2-1.500 3 0 2 4 2 2.500 0 4-1-1 2-3 2.500-8 0-9-5 0-4 3-4.500 2.500.5 2.500 3z" fill="#05243d"/></svg></div>
        <div class="task-btn task-on d-flex align-items-center justify-content-center"><svg width="22" height="18" viewBox="0 0 22 18"><path d="M0 0h8l2 2h12v15H0z" fill="#e8a02a"/><path d="M0 3.500h22V17H0z" fill="#ffd667"/><path d="M4 18v-6q0-1.500 1.500-1.500h11q1.500 0 1.500 1.500v6h-4v-3.500H8V18z" fill="#3f94cc"/></svg></div>
        <div class="task-btn d-flex align-items-center justify-content-center" style="padding-left:2px"><svg width="24" height="24" viewBox="0 0 24 24"><path d="M3 3l2.500 3Q7 5 9 5l2 1q1-4 5-5.500 0 3 3 5l.5-1.500q4 4 4 9a11 11 0 0 1-22.500 0Q.5 8 3 3z" fill="url(#gFox)"/><path d="M8 9q3-1 6 0 4 2 3 6-2 4-6 3.500-5-1-4.500-5.500l4-.5z" fill="#7b3fe0"/><path d="M4 7q4-1 6 2l3 .5q-1 2-4 2-1 2 0 4Q4 14 4 7z" fill="#ff8a16"/></svg></div>

        <div class="ms-auto d-flex align-items-center">
            <svg width="88" height="20" viewBox="0 0 88 20" fill="none" stroke="#fff" stroke-width="1.200">
                <path d="M1.500 12.500L7 7l5.500 5.500"/>
                <rect x="26" y="6.500" width="8" height="8" rx="1.500"/><path d="M34 9.500l3-2v6l-3-2M27 2.500q4-2 8 0M27 18q4 2 8 0"/>
                <path d="M47.500 7.500h2.500L53.500 4v12L50 12.500h-2.500zM56 7.500q1.500 2.500 0 5M58.500 5.500q3 4.500 0 9M61 3.500q4.500 6.500 0 13"/>
                <path d="M76 5.500h11v8H75M71.500 4h5v4.500h-5zM74 8.500V16M80.500 13.500v3M77 16.500h7"/>
            </svg>
            <div class="text-center" style="width:72px;line-height:18px;font-size:11.200px;padding-bottom:1px">10:29 PM<br>5/23/2026</div>
            <svg style="margin-left:7px" width="17" height="17" viewBox="0 0 17 17"><path d="M.5 1.500h16v12h-5l-3 3v-3h-8z" fill="none" stroke="#fff" stroke-width="1.200"/></svg>
            <div style="width:1px;height:40px;background:#5a6270;margin:0 4px 0 19px"></div>
        </div>
    </div>

    <div class="guide guide-h"></div>
    <div class="guide guide-v"></div>

    <script src="https://cdn.jsdelivr.net/npm/bootstrap@5.3.0/dist/js/bootstrap.bundle.min.js"></script>
</body>
</html>
